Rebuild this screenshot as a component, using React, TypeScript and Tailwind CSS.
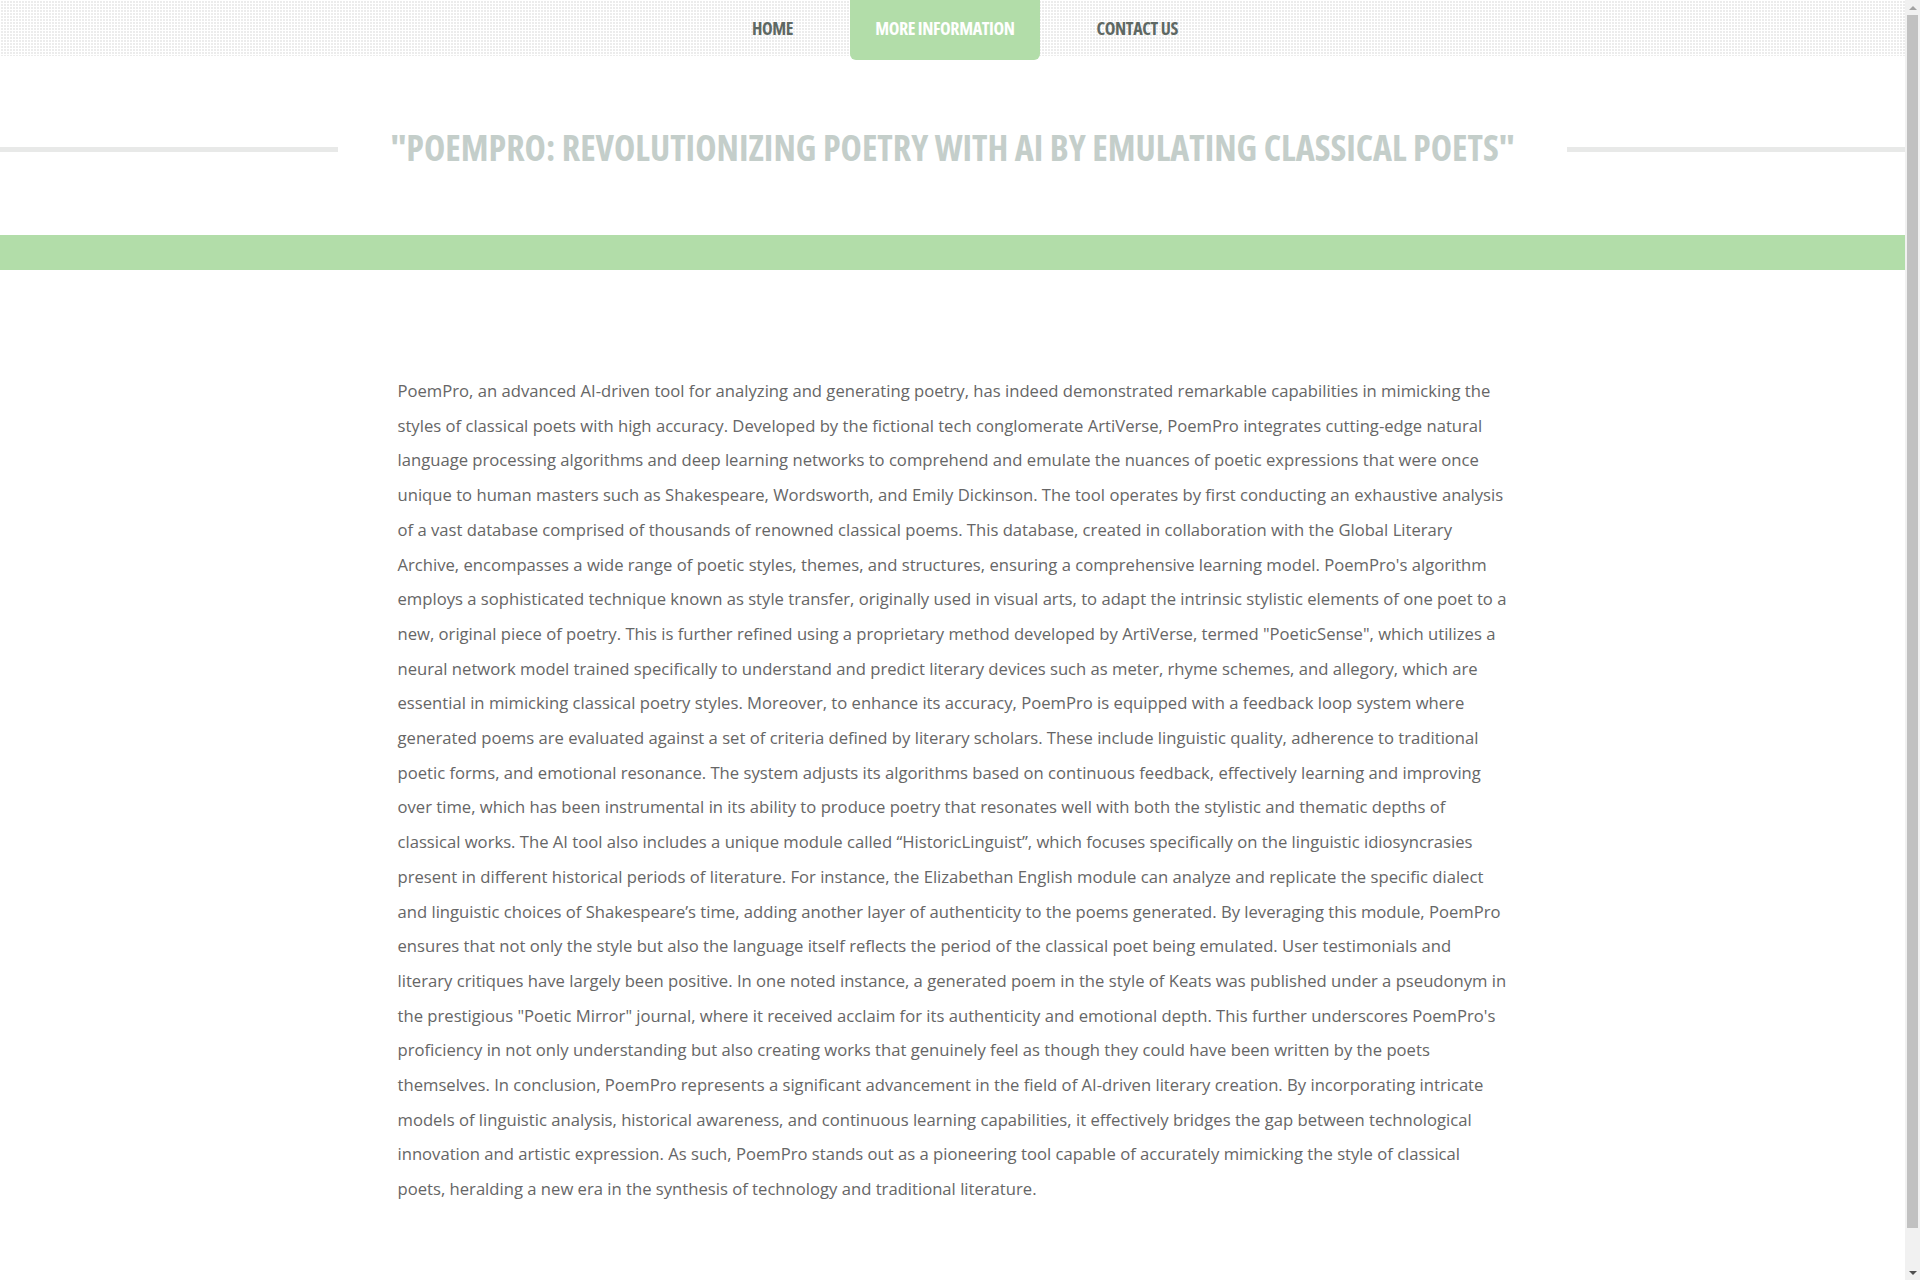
import React from "react";

const body = `PoemPro, an advanced AI-driven tool for analyzing and generating poetry, has indeed demonstrated remarkable capabilities in mimicking the styles of classical poets with high accuracy. Developed by the fictional tech conglomerate ArtiVerse, PoemPro integrates cutting-edge natural language processing algorithms and deep learning networks to comprehend and emulate the nuances of poetic expressions that were once unique to human masters such as Shakespeare, Wordsworth, and Emily Dickinson. The tool operates by first conducting an exhaustive analysis of a vast database comprised of thousands of renowned classical poems. This database, created in collaboration with the Global Literary Archive, encompasses a wide range of poetic styles, themes, and structures, ensuring a comprehensive learning model. PoemPro's algorithm employs a sophisticated technique known as style transfer, originally used in visual arts, to adapt the intrinsic stylistic elements of one poet to a new, original piece of poetry. This is further refined using a proprietary method developed by ArtiVerse, termed "PoeticSense", which utilizes a neural network model trained specifically to understand and predict literary devices such as meter, rhyme schemes, and allegory, which are essential in mimicking classical poetry styles. Moreover, to enhance its accuracy, PoemPro is equipped with a feedback loop system where generated poems are evaluated against a set of criteria defined by literary scholars. These include linguistic quality, adherence to traditional poetic forms, and emotional resonance. The system adjusts its algorithms based on continuous feedback, effectively learning and improving over time, which has been instrumental in its ability to produce poetry that resonates well with both the stylistic and thematic depths of classical works. The AI tool also includes a unique module called “HistoricLinguist”, which focuses specifically on the linguistic idiosyncrasies present in different historical periods of literature. For instance, the Elizabethan English module can analyze and replicate the specific dialect and linguistic choices of Shakespeare’s time, adding another layer of authenticity to the poems generated. By leveraging this module, PoemPro ensures that not only the style but also the language itself reflects the period of the classical poet being emulated. User testimonials and literary critiques have largely been positive. In one noted instance, a generated poem in the style of Keats was published under a pseudonym in the prestigious "Poetic Mirror" journal, where it received acclaim for its authenticity and emotional depth. This further underscores PoemPro's proficiency in not only understanding but also creating works that genuinely feel as though they could have been written by the poets themselves. In conclusion, PoemPro represents a significant advancement in the field of AI-driven literary creation. By incorporating intricate models of linguistic analysis, historical awareness, and continuous learning capabilities, it effectively bridges the gap between technological innovation and artistic expression. As such, PoemPro stands out as a pioneering tool capable of accurately mimicking the style of classical poets, heralding a new era in the synthesis of technology and traditional literature.`;

// Top navigation
function Nav() {
  const items = [
    { label: "HOME", active: false },
    { label: "MORE INFORMATION", active: true },
    { label: "CONTACT US", active: false },
  ];
  return (
    <nav className="h-[56px] bg-[#ececec] bg-[linear-gradient(90deg,#ffffff_1px,transparent_1px),linear-gradient(#ffffff_1px,transparent_1px)] bg-[size:3px_3px]">
      <ul className="flex justify-center gap-[32px] pl-[25px]">
        {items.map((item) => (
          <li
            key={item.label}
            className={`h-[60px] px-[25px] flex items-center font-['Open_Sans',sans-serif] font-bold [font-stretch:75%] text-[18px] tracking-[-0.4px] ${
              item.active
                ? "bg-[#b2dda9] text-white rounded-b-[6px]"
                : "text-[#5e6863]"
            }`}
          >
            <span className="-mt-[4px]">{item.label}</span>
          </li>
        ))}
      </ul>
    </nav>
  );
}

// Browser scrollbar as seen in the screenshot
function Scrollbar() {
  return (
    <div className="w-[15px] h-screen bg-[#f1f1f1] flex flex-col items-center shrink-0">
      <div className="h-[15px] flex items-center justify-center">
        <div className="w-0 h-0 border-l-[4px] border-r-[4px] border-b-[4px] border-l-transparent border-r-transparent border-b-[#a3a3a3]" />
      </div>
      <div className="w-[11px] flex-1 mb-[37px] bg-[#c1c1c1]" />
      <div className="h-[15px] flex items-center justify-center">
        <div className="w-0 h-0 border-l-[4px] border-r-[4px] border-t-[4px] border-l-transparent border-r-transparent border-t-[#505050]" />
      </div>
    </div>
  );
}

export default function App() {
  return (
    <div className="flex h-screen overflow-hidden bg-white">
      <div className="flex-1 min-w-0">
        <Nav />

        {/* Title with side rules */}
        <div className="flex items-center mt-[64px] h-[56px]">
          <div className="flex-1 h-[5px] bg-[#e8e9e8] mt-[2px]" />
          <h1 className="mx-[52px] font-['Open_Sans',sans-serif] font-bold [font-stretch:75%] text-[36px] text-[#c4ceca] whitespace-nowrap">
            "POEMPRO: REVOLUTIONIZING POETRY WITH AI BY EMULATING CLASSICAL POETS"
          </h1>
          <div className="flex-1 h-[5px] bg-[#e8e9e8] mt-[2px]" />
        </div>

        {/* Green band */}
        <div className="mt-[59px] h-[35px] bg-[#b2dda9]" />

        {/* Article */}
        <main className="w-[1110px] mx-auto pt-[104px] pb-[110px]">
          <p className="font-['Open_Sans',sans-serif] text-[16.65px] leading-[34.7px] text-[#666666]">
            {body}
          </p>
        </main>
      </div>
      <Scrollbar />
    </div>
  );
}
